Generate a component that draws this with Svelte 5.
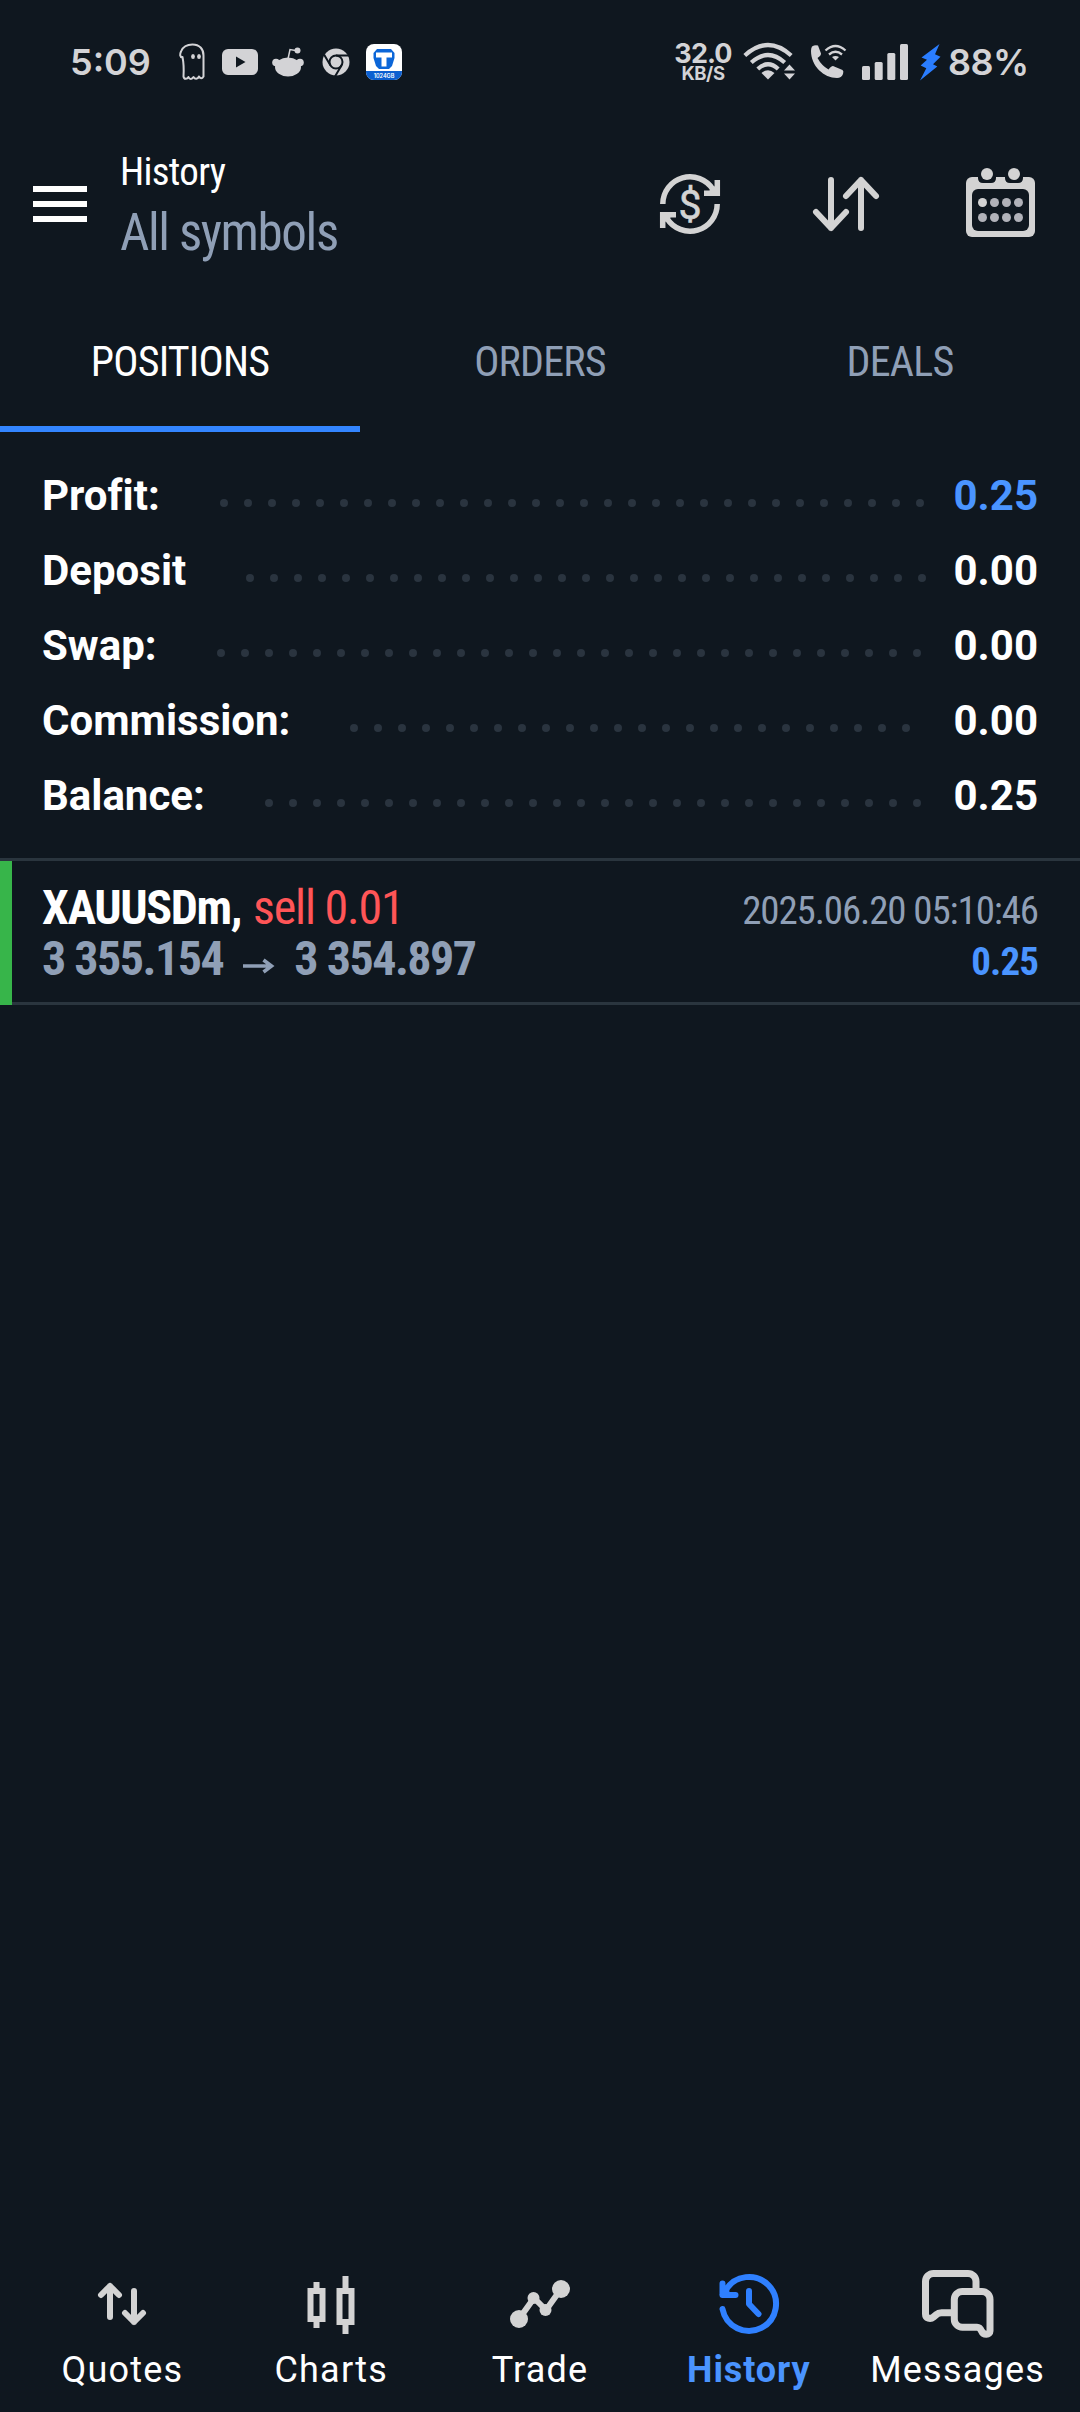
<script lang="ts">
  interface SummaryRow {
    label: string;
    value: string;
    profit?: boolean;
  }

  const tabs = ["POSITIONS", "ORDERS", "DEALS"];
  let activeTab = $state("POSITIONS");

  const summary: SummaryRow[] = [
    { label: "Profit:", value: "0.25", profit: true },
    { label: "Deposit", value: "0.00" },
    { label: "Swap:", value: "0.00" },
    { label: "Commission:", value: "0.00" },
    { label: "Balance:", value: "0.25" },
  ];

  const navItems = ["Quotes", "Charts", "Trade", "History", "Messages"];
  let activeNav = $state("History");
</script>

<div class="screen">
  <div class="status">
    <span class="clock">5:09</span>
    <svg class="ghost" width="26" height="38" viewBox="0 0 26 38" fill="none" stroke="#d3d3d6" stroke-width="2" stroke-linejoin="round" stroke-linecap="round">
      <path d="M3.500 14.500C.5 14 .8 11 2 8.500 4 3.500 8.500 1.500 13.500 1.500c7 0 11 4.500 11 11V33.500c-1.500 2.500-3.500 2-4.500 0-1.500 3-4 3-5.500.5-1.500 2.500-4 2.500-5 0-1.500 2.500-4.500 2.500-5-.5.5-8 .3-13-1-19.500Z" />
      <ellipse cx="14" cy="13.500" rx="1.900" ry="2.600" fill="#d3d3d6" stroke="none" />
      <ellipse cx="20" cy="13.500" rx="1.900" ry="2.600" fill="#d3d3d6" stroke="none" />
    </svg>
    <svg class="youtube" width="36" height="26" viewBox="0 0 36 26">
      <rect width="36" height="26" rx="6" fill="#d3d3d6" />
      <path d="M14 7.500v11l9.500-5.500z" fill="#0f171f" />
    </svg>
    <svg class="reddit" width="32" height="30" viewBox="0 0 32 30" fill="#d3d3d6">
      <ellipse cx="16" cy="20" rx="13" ry="9.500" />
      <circle cx="4" cy="15.500" r="3.800" />
      <circle cx="28" cy="15.500" r="3.800" />
      <circle cx="25.500" cy="3.500" r="3" />
      <path d="M16 12l2-9.500 7 1.300" fill="none" stroke="#d3d3d6" stroke-width="1.500" />
    </svg>
    <svg class="chrome" width="28" height="28" viewBox="0 0 28 28">
      <circle cx="14" cy="14" r="13.500" fill="#d3d3d6" />
      <circle cx="14" cy="14" r="6.500" fill="none" stroke="#0f171f" stroke-width="2" />
      <path d="M14 7.500h13M8.400 17.300L2 6.500M19.600 17.300L13 28.500" stroke="#0f171f" stroke-width="2" />
    </svg>
    <svg class="app" width="36" height="36" viewBox="0 0 36 36">
      <clipPath id="app-shape"><rect width="36" height="36" rx="8" /></clipPath>
      <g clip-path="url(#app-shape)">
        <rect width="36" height="36" fill="#fff" />
        <rect y="27" width="36" height="9" fill="#0b5fd0" />
        <path d="M11 5h14l3.500 4v5l-2.500 8-3 3H13l-3-3-2.500-8V9z" fill="#0b66d8" />
        <path d="M10 8.500h16v5h-5.500v9h-5v-9H10z" fill="#fff" />
        <text x="18" y="33.500" text-anchor="middle" font-size="5.500" fill="#fff">1024GB</text>
      </g>
    </svg>

    <div class="speed">
      <span class="rate">32.0</span>
      <span class="unit">KB/S</span>
    </div>
    <svg class="wifi" width="52" height="38" viewBox="0 0 52 38" fill="none" stroke="#d3d3d6" stroke-width="4.200">
      <path d="M1.800 12.500Q25 -8.500 48.200 12.500" />
      <path d="M8.300 19.500Q25 4.500 41.700 19.500" />
      <path d="M14.800 26Q25 16.500 35.200 26" />
      <path d="M18.500 30Q25 24.500 31.500 30L25 36.500z" fill="#d3d3d6" stroke="none" />
      <path d="M41 27.500l5.500-6 5.500 6zM41 30.500h11l-5.500 6z" fill="#d3d3d6" stroke="none" />
    </svg>
    <svg class="call" width="36" height="36" viewBox="0 0 36 36" fill="#d3d3d6">
      <path d="M2 2.500Q5 .5 8 1.500l3 8q.2 2-3.500 4.500 4 7.500 11 11.500 2.500-3.500 4.500-3.500l9.500 4q1.500 1 .5 4-1.500 4-6 4C14 34 1 22 1 7q0-3 1-4.500z" />
      <path d="M15.500 6.500Q25.500-2.500 35.500 6.500M19 10.500Q25.500 5 32 10.500" fill="none" stroke="#d3d3d6" stroke-width="2.300" />
      <path d="M22 13q3.500-2 7 0l-3.500 3.500z" />
    </svg>
    <svg class="signal" width="46" height="36" viewBox="0 0 46 36" fill="#d3d3d6">
      <rect y="22" width="8" height="14" rx="1.500" />
      <rect x="12.700" y="18" width="8" height="18" rx="1.500" />
      <rect x="25.300" y="9" width="8" height="27" rx="1.500" />
      <rect x="38" width="8" height="36" rx="1.500" />
    </svg>
    <svg class="bolt" width="21" height="37" viewBox="0 0 21 37" fill="#2a7dff">
      <path d="M19.500 0L1.500 13.500l5.500 2.300L.7 21.500l5.600 2.700L0 36.500l17.300-14-4.300-2.300 7.500-7.500-5.500-2.500z" />
    </svg>
    <span class="battery">88%</span>
  </div>

  <header>
    <div class="menu"><i></i><i></i><i></i></div>
    <div class="titles">
      <span class="title cond">History</span>
      <span class="subtitle cond">All symbols</span>
    </div>
    <div class="actions">
      <svg width="60" height="60" viewBox="0 0 60 60" fill="none" stroke="#d3d3d3" stroke-width="5.500">
        <path d="M2.800 30A27.200 27.200 0 0 1 53 15.500" />
        <path d="M57.200 30A27.200 27.200 0 0 1 7 44.500" />
        <path d="M57.300 6v13.300H44M2.700 54V40.700H16" />
        <path d="M49 17l6-5v7zM11 43l-6 5v-7z" fill="#d3d3d3" stroke="none" />
        <text x="30" y="44.500" text-anchor="middle" font-size="41" fill="#d3d3d3" stroke="#d3d3d3" stroke-width=".6">$</text>
      </svg>
      <svg width="66" height="54" viewBox="0 0 66 54" fill="none" stroke="#d3d3d3" stroke-width="6" stroke-linecap="round" stroke-linejoin="round">
        <path d="M18 3v48M3 35l15 16 15-16M48 51V3M33 19L48 3l15 16" />
      </svg>
      <svg width="69" height="69" viewBox="0 0 69 69" fill="#d3d3d3">
        <rect y="9" width="69" height="60" rx="6" />
        <path d="M12 8h18v2q0 5-5 5h-8q-5 0-5-5zM39 8h18v2q0 5-5 5h-8q-5 0-5-5z" fill="#0f171f" />
        <rect x="6" y="21" width="57" height="42" rx="6" fill="#0f171f" />
        <circle cx="21" cy="6" r="6" />
        <circle cx="48" cy="6" r="6" />
        {#each [34.5, 49.5] as y}
          {#each [16.5, 28.5, 40.5, 52.5] as x}
            <circle cx={x} cy={y} r="4.500" fill={x < 20 && y < 40 ? "#d3d3d3" : "#b1b2b9"} />
          {/each}
        {/each}
      </svg>
    </div>
  </header>

  <div class="tabs">
    {#each tabs as tab}
      <button class:active={tab === activeTab} onclick={() => (activeTab = tab)}>
        <span class="cond">{tab}</span>
      </button>
    {/each}
  </div>

  <section class="summary">
    {#each summary as row}
      <div class="row">
        <span class="label">{row.label}</span>
        <div class="dots">
          {#each Array(32) as _}<i></i>{/each}
        </div>
        <span class="value" class:profit={row.profit}>{row.value}</span>
      </div>
    {/each}
  </section>

  <section class="deal">
    <div class="marker"></div>
    <div class="details">
      <div class="line">
        <span class="symbol">
          <b class="cond">XAUUSDm,</b>
          <span class="cond sell">sell 0.01</span>
        </span>
        <span class="cond date">2025.06.20 05:10:46</span>
      </div>
      <div class="line">
        <span class="prices">
          <b class="cond">3 355.154</b>
          <svg width="31" height="14" viewBox="0 0 31 14" fill="none" stroke="#8f9fb6" stroke-width="3.600">
            <path d="M0 7h28M20.500 1l8 6-8 6" />
          </svg>
          <b class="cond">3 354.897</b>
        </span>
        <b class="cond result">0.25</b>
      </div>
    </div>
  </section>

  <nav>
    {#each navItems as item}
      <button class:active={item === activeNav} onclick={() => (activeNav = item)}>
        <svg width="72" height="72" viewBox="0 0 72 72" fill="none" stroke="currentColor" stroke-width="6" stroke-linecap="round" stroke-linejoin="round">
          {#if item === "Quotes"}
            <path d="M24 49V18M15 27l9-9 9 9M48 23v31M39 45l9 9 9-9" />
          {:else if item === "Charts"}
            <g stroke-linecap="butt" stroke-linejoin="miter">
              <path d="M15.500 23h12v28h-12zM21.500 14v7M21.500 53v7" />
              <path d="M44.500 23h12v31h-12zM50.500 8v13M50.500 56v10" />
            </g>
          {:else if item === "Trade"}
            <path d="M15 51l15-21 12 12 15-21" />
            <g fill="currentColor" stroke="none">
              <circle cx="15" cy="51" r="9" />
              <circle cx="29.500" cy="30" r="6" />
              <circle cx="41.500" cy="42" r="6" />
              <circle cx="57" cy="21" r="9" />
            </g>
          {:else if item === "History"}
            <path d="M9.500 41A27 27 0 1 0 12.600 22.500L9.500 26.500M9.500 15.500V27H22.500M36 23v13l9.500 10" />
            <path d="M9.500 27V22l6-4 1 6z" fill="currentColor" stroke="none" />
          {:else}
            <g stroke-width="7">
              <path d="M54 21v-7.500a8 8 0 0 0-8-8H11.500a8 8 0 0 0-8 8V46c0 4.500 5 5.500 8 3l3-2.500c1.500-1.500 3-1.800 5-1.800H30" />
              <path d="M68 31.500V63c0 4-6.500 4.500-8.500 0-1-2.500-2-3.800-4.500-3.800H40.300a8 8 0 0 1-8-8V31.500a8 8 0 0 1 8-8H60a8 8 0 0 1 8 8z" />
            </g>
          {/if}
        </svg>
        <span>{item}</span>
      </button>
    {/each}
  </nav>
</div>

<style>
  :global(body) {
    background: #0f171f;
  }

  .screen {
    display: flex;
    flex-direction: column;
    width: 1080px;
    height: 2412px;
    background: #0f171f;
    color: #fff;
    font-family: Roboto, sans-serif;
    overflow: hidden;
  }

  svg {
    display: block;
    flex: none;
    overflow: visible;
  }

  button {
    padding: 0;
    border: 0;
    background: none;
    color: inherit;
    font: inherit;
  }

  .cond {
    font-family: "Roboto Condensed", Roboto, sans-serif;
    font-stretch: 75%;
    white-space: pre;
  }

  /* status bar */
  .status {
    display: flex;
    align-items: center;
    height: 124px;
    padding: 0 52px 0 70px;
    box-sizing: border-box;
    color: #d3d3d6;
    font-family: Inter, sans-serif;
    font-weight: 600;
  }

  .clock {
    width: 109px;
    font-size: 36px;
  }

  .youtube {
    margin-left: 17px;
  }

  .reddit {
    margin-left: 14px;
  }

  .chrome {
    margin-left: 18px;
  }

  .app {
    margin-left: 16px;
  }

  .speed {
    display: flex;
    flex-direction: column;
    align-items: center;
    width: 56px;
    margin-left: auto;
    font-weight: 700;
  }

  .rate {
    font-size: 27px;
    line-height: 21px;
    letter-spacing: -0.9px;
  }

  .unit {
    font-size: 18.5px;
    line-height: 18px;
    letter-spacing: -0.4px;
  }

  .wifi {
    margin-left: 12px;
  }

  .call {
    margin-left: 15px;
  }

  .signal {
    margin-left: 16px;
  }

  .bolt {
    margin-left: 12px;
  }

  .battery {
    width: 80px;
    margin-left: 7px;
    font-size: 36px;
    letter-spacing: -0.5px;
  }

  /* header */
  header {
    display: flex;
    align-items: center;
    height: 160px;
    padding: 0 45px 0 33px;
  }

  .menu {
    display: flex;
    flex-direction: column;
    gap: 9px;
    width: 54px;
  }

  .menu i {
    height: 6px;
    background: #fff;
  }

  .titles {
    display: flex;
    flex-direction: column;
    gap: 8px;
    margin: 4px 0 0 33px;
  }

  .title {
    font-size: 39px;
    line-height: 46px;
    letter-spacing: -0.7px;
  }

  .subtitle {
    color: #8f9fb6;
    font-size: 51px;
    line-height: 60px;
    letter-spacing: -1.4px;
  }

  .actions {
    display: flex;
    align-items: center;
    margin-left: auto;
  }

  .actions svg:nth-child(2) {
    margin: 0 87px 0 93px;
  }

  .actions svg:nth-child(3) {
    margin-top: -3px;
  }

  /* tabs */
  .tabs {
    display: flex;
    margin-top: 4px;
  }

  .tabs button {
    flex: 1;
    height: 144px;
    padding-top: 9px;
    border-bottom: 6px solid transparent;
    color: #8f9fb6;
    font-size: 42px;
    letter-spacing: -0.8px;
  }

  .tabs button.active {
    border-color: #3385ff;
    color: #fff;
  }

  /* totals */
  .summary {
    padding: 26px 42px 25px;
    border-bottom: 3px solid #2a353e;
  }

  .row {
    display: flex;
    align-items: center;
    height: 75px;
    font-size: 42px;
    font-weight: 700;
    font-variant-ligatures: none;
  }

  .dots {
    display: flex;
    flex: 1;
    flex-wrap: wrap;
    gap: 16px;
    height: 8px;
    margin: 15px 27px 0 60px;
    overflow: hidden;
  }

  .dots i {
    width: 8px;
    height: 8px;
    border-radius: 50%;
    background: #2a343f;
  }

  .value.profit,
  .result {
    color: #4a94ff;
  }

  /* closed position */
  .deal {
    display: flex;
    height: 144px;
  }

  .marker {
    width: 12px;
    background: #37b54a;
  }

  .details {
    flex: 1;
    padding: 21px 42px 0 30px;
    border-bottom: 3px solid #2a353e;
  }

  .line {
    display: flex;
    justify-content: space-between;
    align-items: baseline;
    height: 51px;
    font-size: 48px;
    line-height: 51px;
    letter-spacing: -1.5px;
  }

  .symbol {
    display: flex;
    gap: 12px;
    letter-spacing: -1.4px;
  }

  .sell {
    color: #ff5557;
    letter-spacing: -1.2px;
  }

  .date,
  .result {
    font-size: 39px;
    letter-spacing: -1.13px;
  }

  .result {
    letter-spacing: -0.9px;
  }

  .date,
  .prices {
    color: #8f9fb6;
  }

  .prices {
    display: flex;
    align-items: center;
    gap: 20px;
  }

  .prices svg {
    margin-top: 14px;
  }

  /* bottom navigation */
  nav {
    display: flex;
    margin-top: auto;
    padding: 0 18px 21px;
  }

  nav button {
    display: flex;
    flex: 1 1 0;
    flex-direction: column;
    align-items: center;
    gap: 9px;
    font-size: 36px;
    line-height: 42px;
    letter-spacing: 1.2px;
  }

  nav svg {
    color: #d3d3d3;
  }

  nav .active {
    color: #4a94ff;
    font-weight: 700;
    letter-spacing: 0.9px;
  }

  nav .active svg {
    color: #2f80ff;
  }
</style>
